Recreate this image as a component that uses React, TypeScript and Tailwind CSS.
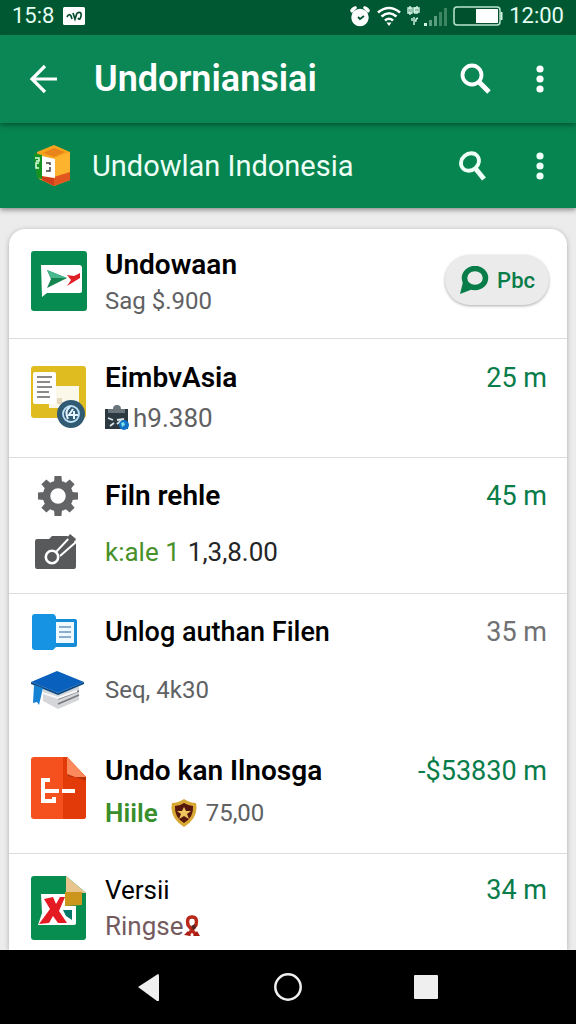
import type { ReactNode } from "react";

function SearchIcon({ tilted = false }: { tilted?: boolean }) {
  return (
    <svg viewBox="0 0 32 32" className="size-8" fill="none" stroke="currentColor">
      <ellipse cx="12" cy="12" rx="9.5" ry={tilted ? 8.2 : 9.5} strokeWidth="3.8" transform={tilted ? "rotate(-40 12 12)" : undefined} />
      <path d={tilted ? "M17 18l9 11" : "M18 18l11 11"} strokeWidth="5" />
    </svg>
  );
}

function MoreIcon() {
  return (
    <svg viewBox="0 0 8 28" className="h-7 w-2" fill="currentColor">
      <circle cx="4" cy="4" r="3.6" />
      <circle cx="4" cy="14" r="3.6" />
      <circle cx="4" cy="24" r="3.6" />
    </svg>
  );
}

function StatusBar() {
  return (
    <div className="flex h-[35px] items-center justify-between bg-[#005832] px-3 pb-1 text-[22px] leading-8 text-[#e4fff3]">
      <div className="flex items-center gap-2">
        <span>15:8</span>
        <svg viewBox="0 0 24 20" className="h-5 w-6">
          <rect x="1" y="1" width="22" height="18" rx="1.5" fill="#fff" />
          <path d="M5 11q2-4 4-1l1 3m1-6l2 6 2-6m0 0q5-2 4 3t-3 2" fill="none" stroke="#064b2c" strokeWidth="1.7" />
        </svg>
      </div>
      <div className="flex items-center gap-1.5">
        <svg viewBox="0 0 22 22" className="size-[22px]" fill="#fff">
          <circle cx="11" cy="12.5" r="8.7" />
          <path d="M1 6q1-4 6-5l1 2-5 5zM21 6q-1-4-6-5l-1 2 5 5z" />
          <path d="M9 12l2 2 4-3" fill="none" stroke="#005832" strokeWidth="1.8" />
        </svg>
        <svg viewBox="0 0 24 20" className="h-5 w-6" fill="none" stroke="#fff" strokeWidth="2.6">
          <path d="M1 6.5q11-9 22 0M4.500 10.500q7.500-6.500 15 0M8 14.500q4-3.500 8 0" />
          <path d="M9.500 16.500h5L12 20z" fill="#fff" stroke="none" />
        </svg>
        <svg viewBox="0 0 40 22" className="h-[22px] w-10" fill="none" stroke="#d5f5e6" strokeWidth="1.4">
          <path d="M1 3h4v5H1zM3 1v9M8 2v7M7 3h5v4H7zM10 1v8M7 12v8M5 13v3M11 13q-3 1-2 4" />
          <path d="M18.500 18v3" strokeWidth="3" />
          <path d="M23.500 15v6M28.500 11v10" strokeWidth="3" stroke="#5b9e7d" />
          <path d="M33.500 7v14M38.500 3v18" strokeWidth="3" stroke="#3d8561" />
        </svg>
        <svg viewBox="0 0 50 20" className="h-5 w-[50px]">
          <rect x="1" y="1" width="46" height="18" rx="3" fill="#00502d" stroke="#b9e5cf" strokeWidth="1.5" />
          <path d="M23 3h22v14H23z" fill="#fff" />
          <path d="M48.500 6v8" stroke="#d5f5e6" strokeWidth="2" />
        </svg>
        <span>12:00</span>
      </div>
    </div>
  );
}

function BoxLogo() {
  return (
    <svg viewBox="0 0 38 42" className="h-[42px] w-[38px]">
      <path d="M3 7L20 0l16 7v28L20 41 5 34z" fill="#f6a51d" />
      <path d="M9 8l11-5 11 4-11 5z" fill="#e88419" />
      <path d="M20 13l16-6v20l-16 6z" fill="#fdb32d" />
      <path d="M20 32l16-5v8l-16 6z" fill="#e2571f" />
      <path d="M8 31l12 2v8L8 35z" fill="#cf3f1b" />
      <path d="M0 8l8 2v24l-5-1L0 13z" fill="#169323" />
      <path d="M8 11l13 3v19L8 31z" fill="#fff" />
      <path d="M12 18h4v2m0 2v4h-4" fill="none" stroke="#453f3b" strokeWidth="1.5" />
      <path d="M1 13h4v3H2m3 2H2v5h3" fill="none" stroke="#d9ffe0" strokeWidth="1.5" />
    </svg>
  );
}

function MessageIcon() {
  return (
    <svg viewBox="0 0 56 60" className="h-[60px] w-14">
      <rect width="56" height="60" rx="3" fill="#078b50" />
      <path d="M10 14h38q3 0 3 3v23q0 2-3 2H16l-5 4z" fill="#fff" />
      <path d="M16 19l20 8-20 10 4-9z" fill="#168451" />
      <path d="M16 19l20 8H20z" fill="#49b88e" />
      <path d="M36 24l7 1 6-3v5l-13 8 4-6z" fill="#df2029" />
    </svg>
  );
}

function DocumentsIcon() {
  return (
    <svg viewBox="0 0 56 64" className="h-16 w-14">
      <rect y="2" width="55" height="52" rx="3" fill="#dfbd20" />
      <path d="M18 22h30v22H18z" fill="#fbf7e9" />
      <path d="M26 34h5v6h-5z" fill="#e4dac0" />
      <rect x="2" y="8" width="23" height="32" rx="2" fill="#fff" />
      <path d="M6 13h15M6 18h13M6 23h15M6 28h12M6 33h13" stroke="#66645f" strokeWidth="1.5" />
      <circle cx="40" cy="50" r="14" fill="#315a73" />
      <circle cx="40" cy="50" r="8" fill="none" stroke="#bfe2f8" strokeWidth="1.8" />
      <path d="M39 43q-6 4-2 12M42 45l-4 6h9M43 47v8" fill="none" stroke="#e5f5ff" strokeWidth="2" />
    </svg>
  );
}

function ClipboardIcon() {
  return (
    <svg viewBox="0 0 24 26" className="h-[26px] w-6">
      <rect y="4" width="23" height="20" fill="#2c3940" />
      <path d="M3 4h5q0-4 4-4t4 4h4v4H3z" fill="#69757a" />
      <path d="M3 13l5 2m-3 6l4-3m3-3l7-1M12 19l5-4" fill="none" stroke="#d7e5e8" strokeWidth="1.8" />
      <circle cx="19" cy="20" r="5" fill="#1272c4" />
      <path d="M16 18l3-1 1 3-3 2z" fill="#7ee0ed" />
    </svg>
  );
}

const gearTeeth = [0, 45, 90, 135, 180, 225, 270, 315];

function GearIcon() {
  return (
    <svg viewBox="0 0 40 40" className="size-10" fill="#636466">
      {gearTeeth.map((angle) => (
        <path key={angle} d="M16 7l.5-7h7L24 7z" transform={`rotate(${angle} 20 20)`} />
      ))}
      <circle cx="20" cy="20" r="11.5" fill="none" stroke="#636466" strokeWidth="7.5" />
    </svg>
  );
}

function CameraIcon() {
  return (
    <svg viewBox="0 0 46 36" className="h-9 w-[46px]">
      <path d="M2 5h12l3-3h15l9 4v26q0 3-2 3H2q-2 0-2-3V8q0-3 2-3z" fill="#58595b" />
      <path d="M21 18L35 3l6 5-16 14" fill="#58595b" stroke="#fff" strokeWidth="2" />
      <circle cx="17" cy="23" r="6.2" fill="#58595b" stroke="#fff" strokeWidth="2.6" />
      <path d="M35 0l6 5-3 4-6-5z" fill="#58595b" />
    </svg>
  );
}

function FolderIcon() {
  return (
    <svg viewBox="0 0 52 36" className="h-9 w-[52px]">
      <rect x="18" y="5" width="27" height="28" rx="2" fill="#168bd6" />
      <path d="M22 8h20v21H22z" fill="#eefaff" />
      <path d="M27 13h12M27 18h12M27 23h12" stroke="#6997bd" strokeWidth="1.6" />
      <path d="M3 0h18q2 0 3 3v30l-3 3H3q-3 0-3-3V3q0-3 3-3z" fill="#1793e3" />
    </svg>
  );
}

function BooksIcon() {
  return (
    <svg viewBox="0 0 54 38" className="h-[38px] w-[54px]">
      <path d="M12 18l15 5 21-8v14L27 38 12 30z" fill="#d4d6d9" />
      <path d="M27 28l21-8M27 33l21-9" fill="none" stroke="#77797e" strokeWidth="1.5" />
      <path d="M12 22l15 5 19-7" fill="none" stroke="#f8f8f8" strokeWidth="2" />
      <path d="M0 11L26 0l27 11-26 11z" fill="#0960bd" />
      <path d="M0 11l27 11 26-11v2L27 24 0 13z" fill="#064884" />
      <path d="M3 14l9 3-4 17-2-3-4 1z" fill="#1682d4" />
    </svg>
  );
}

function SlidesIcon() {
  return (
    <svg viewBox="0 0 56 62" className="h-[62px] w-14">
      <path d="M3 0h33l19 20v39q0 3-3 3H3q-3 0-3-3V3q0-3 3-3z" fill="#f4511e" />
      <path d="M32 0h4l19 20v39q0 3-3 3H32z" fill="#e23a09" />
      <path d="M36 0l19 20H39q-3 0-3-3z" fill="#fb895c" />
      <path d="M36 17q0 3 3 3h16v4z" fill="#b92f0b" />
      <path d="M19 23h-7v21h11v-4M12 34h16M31 34h13" fill="none" stroke="#fff" strokeWidth="4" />
    </svg>
  );
}

function BadgeIcon() {
  return (
    <svg viewBox="0 0 28 28" className="size-7">
      <path d="M14 0q6 4 12 4 3 15-12 24Q-1 19 2 4q6 0 12-4z" fill="#d7a934" />
      <path d="M14 4q5 3 9 3 1 11-9 17Q4 18 5 7q5 0 9-3z" fill="#56170d" />
      <path d="M14 8l2 4h5l-4 3 2 5-5-3-5 3 2-5-4-3h5z" fill="#efc65e" />
    </svg>
  );
}

function SheetsIcon() {
  return (
    <svg viewBox="0 0 56 64" className="h-16 w-14">
      <path d="M3 0h32l20 17v44q0 3-3 3H3q-3 0-3-3V3q0-3 3-3z" fill="#078d50" />
      <path d="M10 18h24v12h11v17q0 2-2 2H7l4-12z" fill="#fff" />
      <path d="M35 0l20 17H35z" fill="#e7c58c" />
      <path d="M34 16h17v13l-17 1z" fill="#cc951c" />
      <path d="M32 34h9v10l-6-4z" fill="#067869" />
      <path d="M13 23l9-2 3 7 4-7h5l-6 14 8 12h-9l-5-7-4 7-10 1 11-15z" fill="#e41b23" />
    </svg>
  );
}

function RibbonIcon() {
  return (
    <svg viewBox="0 0 16 24" className="h-6 w-4">
      <path d="M4 21l8-10q2-8-4-8t-4 8l8 10" fill="none" stroke="#b92719" strokeWidth="3.5" />
      <path d="M7 12l4-2 1 4-3 2z" fill="#57251d" />
      <path d="M0 21l4-4 3 5M9 22l4-5 3 5" fill="#a91c14" />
    </svg>
  );
}

interface RowProps {
  icon: ReactNode;
  subIcon?: ReactNode;
  title: string;
  detail: ReactNode;
  trailing?: ReactNode;
  className: string;
  gap?: string;
  titleClass?: string;
}

function Row({ icon, subIcon, title, detail, trailing, className, gap = "", titleClass = "text-[28px] font-semibold" }: RowProps) {
  return (
    <li className={`flex items-start gap-[18px] pr-5 pl-[22px] ${className}`}>
      {subIcon ? (
        <div className={`flex w-[54px] shrink-0 flex-col ${gap}`}>
          <div className="flex h-9 items-center justify-center">{icon}</div>
          <div className="flex h-9 items-center justify-center">{subIcon}</div>
        </div>
      ) : (
        <div className="mt-1 w-14 shrink-0">{icon}</div>
      )}
      <div className={`flex min-w-0 flex-1 flex-col whitespace-nowrap ${subIcon ? "pl-0.5" : ""} ${gap}`}>
        <h2 className={`leading-9 text-black ${titleClass}`}>{title}</h2>
        <div className="flex h-9 items-center text-2xl leading-9 text-[#606163]">{detail}</div>
      </div>
      {trailing}
    </li>
  );
}

function Amount({ children, muted = false }: { children: ReactNode; muted?: boolean }) {
  return (
    <span className={`text-[27px] leading-9 whitespace-nowrap ${muted ? "text-[#707173]" : "text-[#087c49]"}`}>
      {children}
    </span>
  );
}

export default function App() {
  return (
    <div className="flex min-h-screen flex-col bg-[#ececed] font-['Roboto',sans-serif]">
      <StatusBar />
      <header className="relative z-10 flex h-[88px] items-center bg-[#0b8755] pr-8 pl-7 text-white shadow-[0_2px_5px_#00522f]">
        <button aria-label="Back" className="mr-9">
          <svg viewBox="0 0 30 30" className="size-[30px]" fill="none" stroke="currentColor" strokeWidth="3.2">
            <path d="M29 15H4M17 2L4 15l13 13" />
          </svg>
        </button>
        <h1 className="flex-1 text-4xl leading-10 font-semibold">Undorniansiai</h1>
        <button aria-label="Search" className="mr-11"><SearchIcon /></button>
        <button aria-label="More options"><MoreIcon /></button>
      </header>
      <div className="flex h-[85px] items-center bg-[#078550] pr-8 pl-[34px] text-[#edfff6] shadow-[0_2px_5px_#8b8b8b]">
        <BoxLogo />
        <p className="ml-5 flex-1 text-[29px] leading-10">Undowlan Indonesia</p>
        <button aria-label="Search in Indonesia" className="mr-[46px]"><SearchIcon tilted /></button>
        <button aria-label="More Indonesia options"><MoreIcon /></button>
      </div>

      <main className="mt-[21px] flex flex-1 flex-col px-[9px]">
        <ul className="flex-1 rounded-t-2xl bg-white shadow-[0_1px_5px_#aaa]">
          <Row
            className="border-b border-[#dcdfdf] pt-[18px] pb-[19px]"
            icon={<MessageIcon />}
            title="Undowaan"
            detail="Sag $.900"
            trailing={
              <button className="mt-2 -mr-0.5 flex h-[50px] items-center gap-2 rounded-full bg-[#ebebeb] px-3.5 text-[22px] font-medium text-[#087c49] shadow-[0_1px_3px_#aaa]">
                <svg viewBox="0 0 30 28" className="h-7 w-[30px]" fill="none">
                  <ellipse cx="16" cy="12" rx="10.5" ry="9.5" stroke="currentColor" strokeWidth="5.5" />
                  <path d="M4 16L1 28l13-5z" fill="currentColor" />
                </svg>
                Pbc
              </button>
            }
          />
          <Row
            className="border-b border-[#dcdfdf] pt-[21px] pb-[21px]"
            gap="gap-1"
            icon={<DocumentsIcon />}
            title="EimbvAsia"
            detail={<><ClipboardIcon /><span className="ml-1 text-[26px]">h9.380</span></>}
            trailing={<Amount>25 m</Amount>}
          />
          <Row
            className="border-b border-[#dcdfdf] pt-5 pb-[23px]"
            gap="gap-5"
            icon={<GearIcon />}
            subIcon={<CameraIcon />}
            title="Filn rehle"
            detail={
              <div className="flex gap-2 text-[26px]">
                <span className="text-[#48902a]">k:ale 1</span>
                <span className="text-[#242526]">1,3,8.00</span>
              </div>
            }
            trailing={<Amount>45 m</Amount>}
          />
          <Row
            className="pt-5 pb-[25px]"
            gap="gap-[22px]"
            icon={<FolderIcon />}
            subIcon={<BooksIcon />}
            title="Unlog authan Filen"
            titleClass="text-[27px] font-medium"
            detail="Seq, 4k30"
            trailing={<Amount muted>35 m</Amount>}
          />
          <Row
            className="border-b border-[#dcdfdf] pt-5 pb-[22px]"
            gap="gap-1.5"
            icon={<SlidesIcon />}
            title="Undo kan Ilnosga"
            detail={
              <>
                <span className="mr-3 text-[26px] font-semibold text-[#378e2a]">Hiile</span>
                <BadgeIcon />
                <span className="ml-2">75,00</span>
              </>
            }
            trailing={<Amount>-$53830 m</Amount>}
          />
          <Row
            className="pt-[18px] pb-1"
            icon={<SheetsIcon />}
            title="Versii"
            titleClass="text-[26px] font-normal"
            detail={<><span className="text-[26px] text-[#755b60]">Ringse</span><RibbonIcon /></>}
            trailing={<Amount>34 m</Amount>}
          />
        </ul>
      </main>

      <nav className="relative z-10 flex h-[74px] items-center justify-center gap-[110px] bg-black text-[#efefef]">
        <button aria-label="Back to previous screen">
          <svg viewBox="0 0 28 28" className="size-7" fill="currentColor">
            <path d="M2 14L22 1q1 0 1 2v24q0 2-2 1z" />
          </svg>
        </button>
        <button aria-label="Home">
          <svg viewBox="0 0 28 28" className="size-7" fill="none" stroke="currentColor" strokeWidth="2.5">
            <circle cx="14" cy="14" r="12.7" />
          </svg>
        </button>
        <button aria-label="Recent apps">
          <svg viewBox="0 0 28 28" className="size-7" fill="currentColor">
            <rect x="2" y="2" width="24" height="24" rx="1" />
          </svg>
        </button>
      </nav>
    </div>
  );
}
